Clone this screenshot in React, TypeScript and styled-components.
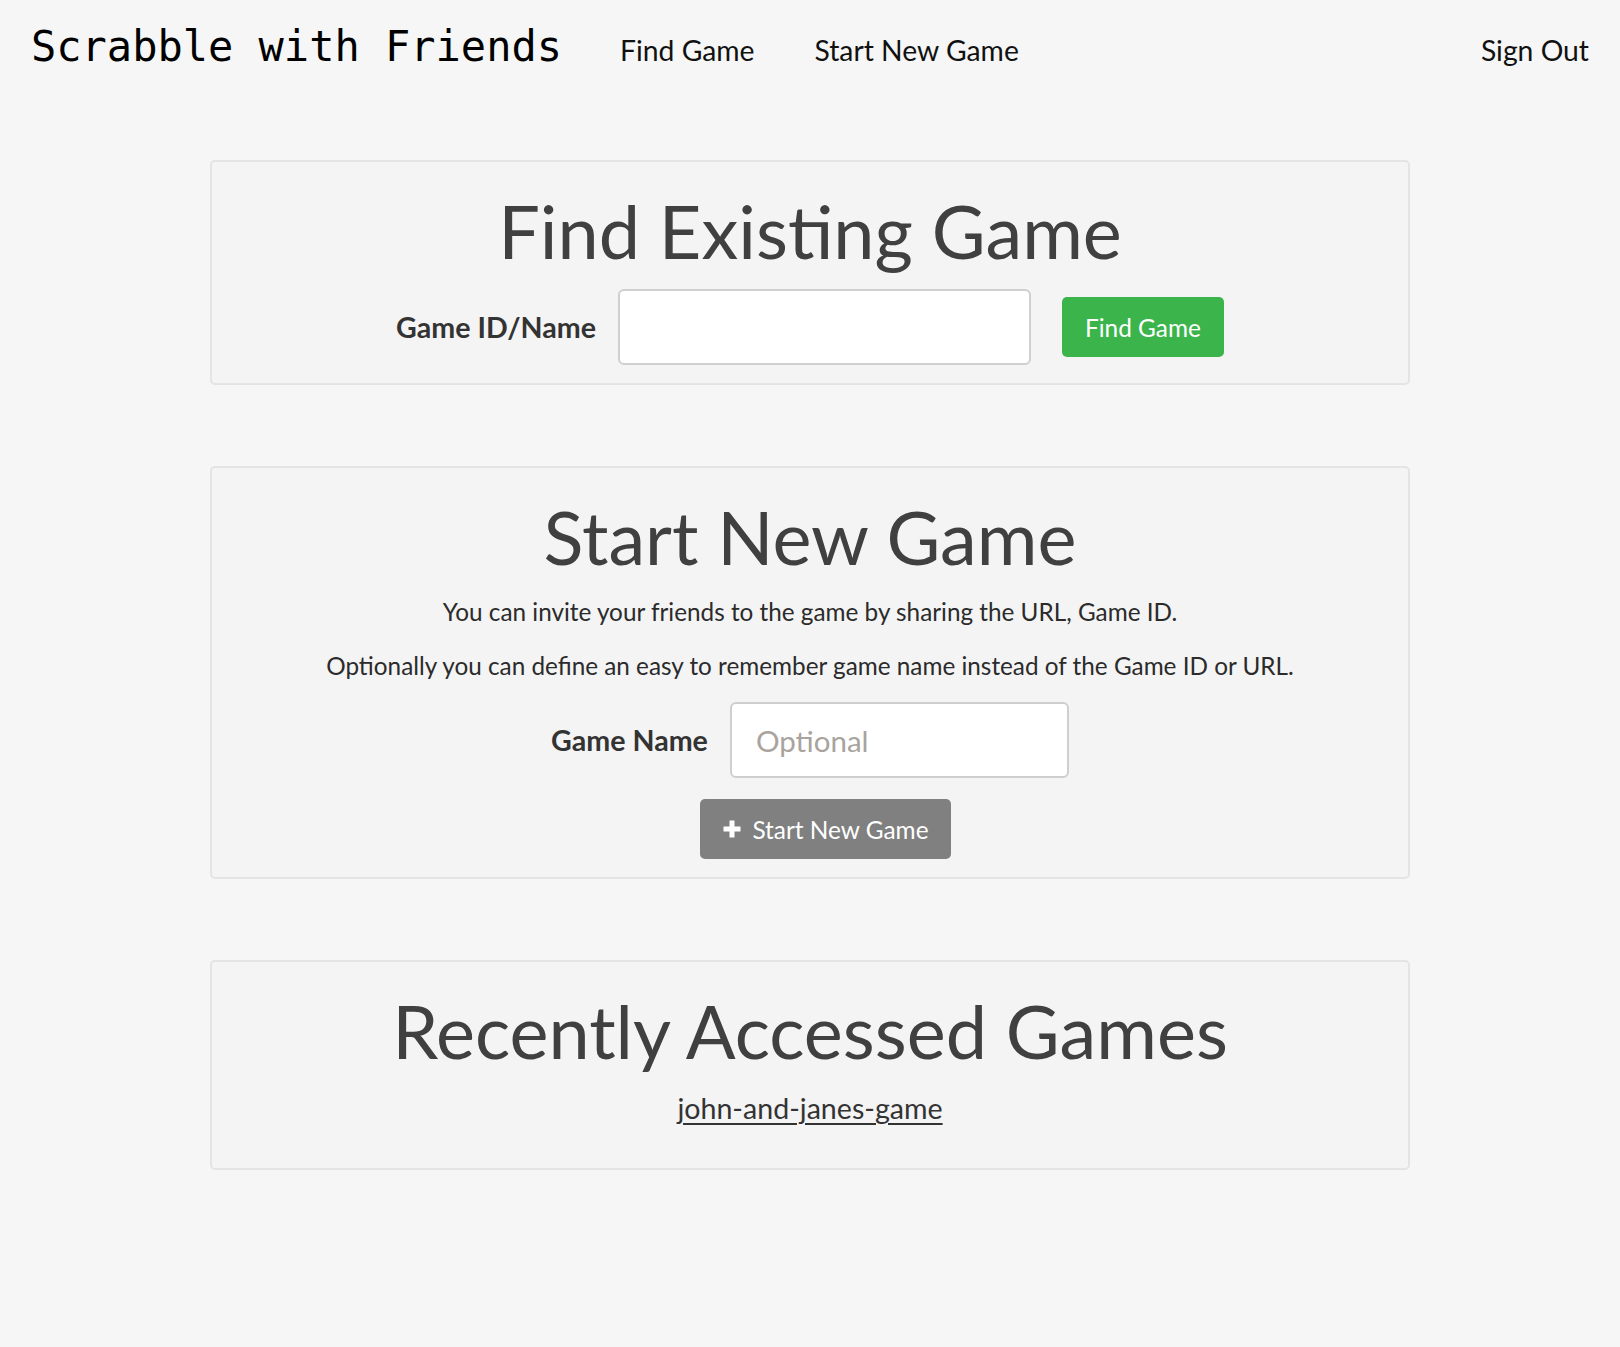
import React from "react";
import styled, { createGlobalStyle } from "styled-components";

const GlobalStyle = createGlobalStyle`
  html, body {
    margin: 0;
    padding: 0;
    background: #f5f6f5;
  }
  body {
    font-family: "Lato", "Open Sans", sans-serif;
    color: #333;
  }
  * { box-sizing: border-box; }
`;

const FONT = `"Lato", "Open Sans", sans-serif`;

const NavBar = styled.nav`
  display: flex;
  align-items: baseline;
  height: 100px;
  padding: 26px 31px 0 31px;
`;

const Brand = styled.a`
  font-family: "DejaVu Sans Mono", "Liberation Mono", monospace;
  font-size: 42px;
  line-height: 1;
  color: #000;
  text-decoration: none;
  margin-right: 58px;
`;

const NavLink = styled.a<{ $right?: boolean }>`
  font-family: ${FONT};
  font-size: 28.3px;
  line-height: 1;
  color: #111;
  text-decoration: none;
  margin-right: 60px;
  ${(p) => (p.$right ? "margin-left: auto; margin-right: 0;" : "")}
`;

const Main = styled.main`
  width: 1200px;
  margin: 60px auto 0;
  display: flex;
  flex-direction: column;
  gap: 81px;
  padding-bottom: 100px;
`;

const Card = styled.section<{ $pb: number }>`
  background: #f4f4f4;
  border: 2px solid #e4e4e4;
  border-radius: 5px;
  padding: 26px 20px ${(p) => p.$pb}px;
  display: flex;
  flex-direction: column;
  align-items: center;
  text-align: center;
`;

const Title = styled.h1`
  margin: 0;
  font-family: ${FONT};
  font-weight: 400;
  font-size: 73.8px;
  line-height: 86px;
  color: #404040;
`;

const FormRow = styled.div<{ $mt: number }>`
  display: flex;
  align-items: center;
  justify-content: center;
  margin-top: ${(p) => p.$mt}px;
`;

const Label = styled.label`
  font-family: ${FONT};
  font-weight: 700;
  font-size: 28.6px;
  color: #333;
  margin-right: 22px;
`;

const TextInput = styled.input<{ $w: number }>`
  width: ${(p) => p.$w}px;
  height: 76px;
  background: #fff;
  border: 2px solid #cfcfcf;
  border-radius: 6px;
  padding: 0 24px;
  font-family: ${FONT};
  font-size: 29.5px;
  color: #333;
  outline: none;
  &::placeholder {
    color: #a9a39e;
  }
`;

const Button = styled.button<{ $variant: "green" | "gray" }>`
  display: inline-flex;
  align-items: center;
  justify-content: center;
  gap: 10px;
  height: 60px;
  padding: 0 22px;
  border: none;
  border-radius: 5px;
  background: ${(p) => (p.$variant === "green" ? "#3bb54b" : "#808080")};
  color: #fff;
  font-family: ${FONT};
  font-size: 24.4px;
  cursor: pointer;
`;

const GreenButton = styled(Button)`
  margin-left: 31px;
  padding: 0 23px;
`;

const Paragraph = styled.p<{ $mt: number }>`
  margin: ${(p) => p.$mt}px 0 0;
  font-family: ${FONT};
  font-size: 24.3px;
  line-height: 32px;
  color: #2b2b2b;
`;

const GameLink = styled.a`
  margin-top: 14px;
  font-family: ${FONT};
  font-size: 28.6px;
  line-height: 40px;
  color: #333;
  text-decoration: underline;
  text-underline-offset: 4px;
  text-decoration-thickness: 2px;
`;

const ButtonRow = styled.div`
  margin-top: 21px;
  padding-left: 31px;
  display: flex;
  justify-content: center;
`;

const PlusIcon = () => (
  <svg width="20" height="20" viewBox="0 0 20 20" aria-hidden="true">
    <path d="M7.5 1.5h5v6h6v5h-6v6h-5v-6h-6v-5h6z" fill="#fff" />
  </svg>
);

export default function App() {
  return (
    <>
      <GlobalStyle />
      <NavBar>
        <Brand href="#">Scrabble with Friends</Brand>
        <NavLink href="#">Find Game</NavLink>
        <NavLink href="#">Start New Game</NavLink>
        <NavLink href="#" $right>
          Sign Out
        </NavLink>
      </NavBar>
      <Main>
        <Card $pb={18}>
          <Title>Find Existing Game</Title>
          <FormRow $mt={15}>
            <Label htmlFor="gameid">Game ID/Name</Label>
            <TextInput id="gameid" $w={413} />
            <GreenButton $variant="green">Find Game</GreenButton>
          </FormRow>
        </Card>
        <Card $pb={18}>
          <Title>Start New Game</Title>
          <Paragraph $mt={16}>
            You can invite your friends to the game by sharing the URL, Game ID.
          </Paragraph>
          <Paragraph $mt={22}>
            Optionally you can define an easy to remember game name instead of the Game ID or URL.
          </Paragraph>
          <FormRow $mt={20}>
            <Label htmlFor="gamename">Game Name</Label>
            <TextInput id="gamename" $w={339} placeholder="Optional" />
          </FormRow>
          <ButtonRow>
            <Button $variant="gray">
              <PlusIcon />
              Start New Game
            </Button>
          </ButtonRow>
        </Card>
        <Card $pb={40}>
          <Title>Recently Accessed Games</Title>
          <GameLink href="#">john-and-janes-game</GameLink>
        </Card>
      </Main>
    </>
  );
}
